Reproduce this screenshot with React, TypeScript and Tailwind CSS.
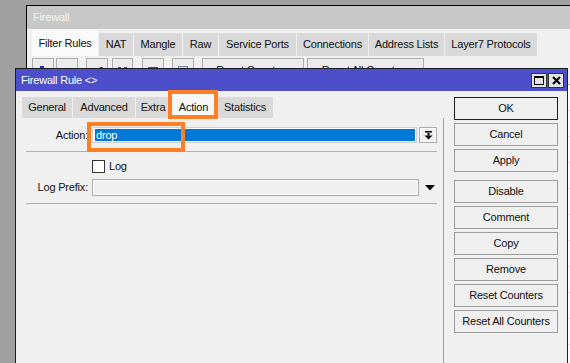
import React from "react";

const FW_TABS = [
  { label: "Filter Rules", w: "w-[67px]", active: true },
  { label: "NAT", w: "w-[35px]" },
  { label: "Mangle", w: "w-[49px]" },
  { label: "Raw", w: "w-[36px]" },
  { label: "Service Ports", w: "w-[78px]" },
  { label: "Connections", w: "w-[72px]" },
  { label: "Address Lists", w: "w-[76px]" },
  { label: "Layer7 Protocols", w: "w-[93px]" },
];

const RULE_TABS = [
  { label: "General", w: "w-[51px]" },
  { label: "Advanced", w: "w-[63px]" },
  { label: "Extra", w: "w-[35px]" },
  { label: "Action", w: "w-[46px]", active: true },
  { label: "Statistics", w: "w-[57px]" },
];

const SIDE_BUTTONS = [
  ["OK", "Cancel", "Apply"],
  ["Disable", "Comment", "Copy", "Remove", "Reset Counters", "Reset All Counters"],
];

function ToolButton({ className, children }: { className: string; children?: React.ReactNode }) {
  return (
    <div className={`h-[22px] border border-[#adadad] bg-[#ebebeb] flex justify-center pt-[7px] ${className}`}>
      {children}
    </div>
  );
}

function FirewallWindow() {
  return (
    <div className="absolute left-[26px] top-[5px] w-[620px] h-[400px] border border-black bg-[#f0f0f0] flex flex-col">
      <div className="h-[23px] bg-[#c8c8c8] text-[#f4f4f4] flex items-center pl-[6px]">Firewall</div>
      <div className="h-[27px] flex items-end pl-[5px]">
        {FW_TABS.map((t) => (
          <div
            key={t.label}
            className={`${t.w} border-r border-[#f0f0f0] flex items-center justify-center ${
              t.active ? "h-[26px] bg-[#fafafa]" : "h-[23px] bg-[#d9d9d9]"
            }`}
          >
            {t.label}
          </div>
        ))}
      </div>
      <div className="flex pt-[2px] pl-[5px]">
        <ToolButton className="w-[22px]">
          <div className="w-[4px] h-[4px] bg-[#1c2fb8] ml-[-2px]" />
        </ToolButton>
        <ToolButton className="w-[22px] ml-[2px]" />
        <ToolButton className="w-[22px] ml-[8px]">
          <div className="w-[3px] h-[3px] bg-[#2b3fc4] ml-[8px] mt-[1px]" />
        </ToolButton>
        <ToolButton className="w-[21px] ml-[4px]">
          <div className="flex gap-[3px] mt-[1px]">
            <div className="w-[3px] h-[3px] bg-[#d02020]" />
            <div className="w-[3px] h-[3px] bg-[#d02020]" />
          </div>
        </ToolButton>
        <ToolButton className="w-[22px] ml-[9px]">
          <div className="w-[10px] h-[5px] bg-[#f2e21a] border border-[#555] mt-[1px]" />
        </ToolButton>
        <ToolButton className="w-[22px] ml-[8px]">
          <div className="w-[10px] h-[5px] bg-[#c9d6e6] border border-[#7a8aa0]" />
        </ToolButton>
        <div className="w-[102px] ml-[8px] h-[22px] border border-[#adadad] bg-[#ebebeb] flex items-center justify-center pt-[2px]">
          Reset Counters
        </div>
        <div className="w-[117px] ml-[3px] h-[22px] border border-[#adadad] bg-[#ebebeb] flex items-center justify-center pt-[2px]">
          Reset All Counters
        </div>
      </div>
      <div className="mt-[4px] mx-[4px] flex-1 bg-white border border-[#adadad]">
        {Array.from({ length: 12 }).map((_, i) => (
          <div key={i} className="h-[26px] border-b border-[#e3e3e3]" />
        ))}
      </div>
    </div>
  );
}

function DropArrow() {
  return (
    <svg width="9" height="9" viewBox="0 0 9 9">
      <rect x="1" y="0" width="7" height="1.5" fill="#000" />
      <rect x="3.5" y="2" width="2" height="2.5" fill="#000" />
      <path d="M0.5 4.5H8.5L4.5 8.5Z" fill="#000" />
    </svg>
  );
}

function RuleDialog() {
  return (
    <div className="absolute left-[15px] top-[68px] w-[553px] h-[310px] border border-[#1e1e1e] bg-[#f0f0f0] flex flex-col">
      <div className="h-[22px] bg-[#4c4fc9] text-white flex items-center pl-[5px] pr-[3px]">
        <span>Firewall Rule &lt;&gt;</span>
        <div className="ml-auto flex gap-[1px]">
          <div className="w-[16px] h-[15px] bg-[#e4e4e4] border border-[#333] flex items-center justify-center">
            <svg width="10" height="9" viewBox="0 0 10 9">
              <rect x="0.5" y="0.5" width="9" height="8" fill="none" stroke="#000" />
              <rect x="0" y="0" width="10" height="2" fill="#000" />
            </svg>
          </div>
          <div className="w-[16px] h-[15px] bg-[#e4e4e4] border border-[#333] flex items-center justify-center">
            <svg width="9" height="9" viewBox="0 0 9 9">
              <path d="M1 1L8 8M8 1L1 8" stroke="#000" strokeWidth="2" />
            </svg>
          </div>
        </div>
      </div>

      <div className="flex flex-1">
        <div className="w-[428px] flex flex-col">
          <div className="h-[27px] flex items-end pl-[6px]">
            {RULE_TABS.map((t) => (
              <div
                key={t.label}
                className={`${t.w} border-r border-[#f0f0f0] flex items-center justify-center ${
                  t.active ? "h-[25px] pt-[3px] bg-[#f7f7f7]" : "h-[21px] bg-[#d9d9d9]"
                }`}
              >
                {t.label}
              </div>
            ))}
          </div>
          <div className="flex-1 border-r border-[#a0a0a0] pt-[9px] pl-[10px]">
            <div className="flex items-center h-[16px]">
              <div className="w-[62px] text-right">Action:</div>
              <div className="ml-[4px] w-[325px] h-[16px] border border-[#cfcfcf] bg-[#0078d7] shadow-[inset_0_0_0_1px_#ffffff] flex items-center pl-[1px]">
                <span className="border border-white text-white leading-[12px] px-[1px] w-[89px]">drop</span>
              </div>
              <div className="ml-[2px] w-[18px] h-[16px] border border-[#ababab] bg-[#f0f0f0] shadow-[inset_0_0_0_1px_#ffffff] flex items-center justify-center">
                <DropArrow />
              </div>
            </div>
            <div className="mt-[8px] h-px w-[411px] bg-[#b0b0b0]" />
            <div className="mt-[8px] flex items-center h-[12px]">
              <div className="w-[62px]" />
              <div className="ml-[4px] w-[13px] h-[13px] border border-[#333] bg-white" />
              <span className="ml-[4px]">Log</span>
            </div>
            <div className="mt-[7px] flex items-center h-[17px]">
              <div className="w-[62px] text-right">Log Prefix:</div>
              <div className="ml-[4px] w-[327px] h-[17px] border border-[#ababab] bg-[#f0f0f0] shadow-[inset_0_0_0_1px_#ffffff]" />
              <svg className="ml-[6px]" width="10" height="6" viewBox="0 0 10 6">
                <path d="M0 0H10L5 5.5Z" fill="#000" />
              </svg>
            </div>
            <div className="mt-[7px] h-px w-[411px] bg-[#b0b0b0]" />
          </div>
        </div>

        <div className="pt-[6px] pl-[10px] flex flex-col">
          {SIDE_BUTTONS.map((group, gi) => (
            <div key={gi} className={`flex flex-col gap-[3px] ${gi > 0 ? "mt-[8px]" : ""}`}>
              {group.map((b) => (
                <div
                  key={b}
                  className={`w-[104px] h-[23px] border bg-[#efefef] flex items-center justify-center ${
                    b === "OK" ? "border-[#1e1e1e]" : "border-[#9c9c9c]"
                  }`}
                >
                  {b}
                </div>
              ))}
            </div>
          ))}
        </div>
      </div>

      <div className="absolute left-[152px] top-[21px] w-[50px] h-[29px] border-[4px] border-[#ff7f27]" />
      <div className="absolute left-[71px] top-[53px] w-[98px] h-[30px] border-[4px] border-[#ff7f27]" />
    </div>
  );
}

export default function App() {
  return (
    <div className="relative w-[570px] h-[363px] overflow-hidden bg-[#a0a0a0] font-['Liberation_Sans',Arial,sans-serif] text-[11px] tracking-[-0.2px] text-[#111]">
      <FirewallWindow />
      <RuleDialog />
    </div>
  );
}
